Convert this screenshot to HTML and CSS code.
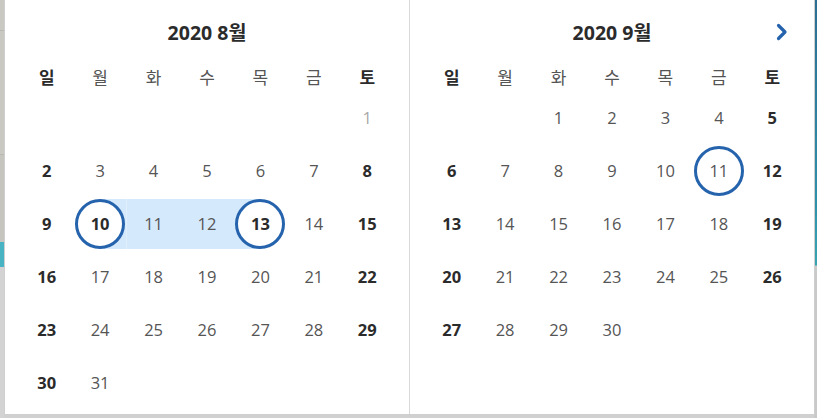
FILE: index.html
```html
<!DOCTYPE html>
<html lang="ko">
<head>
<meta charset="utf-8">
<link rel="stylesheet" href="styles.css">
</head>
<body>
<div class="picker">
  <section class="month">
    <div class="title"><span></span><h2>2020 8월</h2><span></span></div>
    <div class="grid week">
      <div class="wd we">일</div><div class="wd">월</div><div class="wd">화</div><div class="wd">수</div><div class="wd">목</div><div class="wd">금</div><div class="wd we">토</div>
    </div>
    <div class="grid days">
      <div></div><div></div><div></div><div></div><div></div><div></div><div class="d off"><span>1</span></div>
      <div class="d we"><span>2</span></div><div class="d"><span>3</span></div><div class="d"><span>4</span></div><div class="d"><span>5</span></div><div class="d"><span>6</span></div><div class="d"><span>7</span></div><div class="d we"><span>8</span></div>
      <div class="d we"><span>9</span></div><div class="d sel start"><span>10</span></div><div class="d mid"><span>11</span></div><div class="d mid"><span>12</span></div><div class="d sel end"><span>13</span></div><div class="d"><span>14</span></div><div class="d we"><span>15</span></div>
      <div class="d we"><span>16</span></div><div class="d"><span>17</span></div><div class="d"><span>18</span></div><div class="d"><span>19</span></div><div class="d"><span>20</span></div><div class="d"><span>21</span></div><div class="d we"><span>22</span></div>
      <div class="d we"><span>23</span></div><div class="d"><span>24</span></div><div class="d"><span>25</span></div><div class="d"><span>26</span></div><div class="d"><span>27</span></div><div class="d"><span>28</span></div><div class="d we"><span>29</span></div>
      <div class="d we"><span>30</span></div><div class="d"><span>31</span></div>
    </div>
  </section>
  <section class="month second">
    <div class="title"><span></span><h2>2020 9월</h2>
      <button class="next" aria-label="다음 달"><svg width="14" height="20" viewBox="0 0 14 20"><path d="M3.5 3.5 L10 10 L3.5 16.5" fill="none" stroke="#2563ad" stroke-width="3.2" stroke-linecap="round" stroke-linejoin="round"/></svg></button>
    </div>
    <div class="grid week">
      <div class="wd we">일</div><div class="wd">월</div><div class="wd">화</div><div class="wd">수</div><div class="wd">목</div><div class="wd">금</div><div class="wd we">토</div>
    </div>
    <div class="grid days">
      <div></div><div></div><div class="d"><span>1</span></div><div class="d"><span>2</span></div><div class="d"><span>3</span></div><div class="d"><span>4</span></div><div class="d we"><span>5</span></div>
      <div class="d we"><span>6</span></div><div class="d"><span>7</span></div><div class="d"><span>8</span></div><div class="d"><span>9</span></div><div class="d"><span>10</span></div><div class="d today"><span>11</span></div><div class="d we"><span>12</span></div>
      <div class="d we"><span>13</span></div><div class="d"><span>14</span></div><div class="d"><span>15</span></div><div class="d"><span>16</span></div><div class="d"><span>17</span></div><div class="d"><span>18</span></div><div class="d we"><span>19</span></div>
      <div class="d we"><span>20</span></div><div class="d"><span>21</span></div><div class="d"><span>22</span></div><div class="d"><span>23</span></div><div class="d"><span>24</span></div><div class="d"><span>25</span></div><div class="d we"><span>26</span></div>
      <div class="d we"><span>27</span></div><div class="d"><span>28</span></div><div class="d"><span>29</span></div><div class="d"><span>30</span></div>
    </div>
  </section>
</div>
</body>
</html>
```

FILE: styles.css
```css
html, body {
  margin: 0;
  padding: 0;
}
body {
  width: 817px;
  height: 418px;
  overflow: hidden;
  font-family: "Open Sans", "Noto Sans CJK KR", sans-serif;
  background:
    linear-gradient(to bottom, #c9c8c3 0 30px, #b9b8b3 30px 31px, #c9c8c3 31px 154px, #b9b8b3 154px 155px, #c5c4bf 155px 242px, #47b3c3 242px 267px, #d3d3d3 267px) left top / 4px 100% no-repeat,
    linear-gradient(to bottom, #2d6d95 0, #2f8fa8 200px, #3aa3b3 265px, #c9c9c9 266px) right top / 3px 100% no-repeat,
    #d0d0d0;
}
.picker {
  display: flex;
  margin-left: 4px;
  width: 809px;
  height: 414px;
  background: #fff;
  border: 1px solid #cfcfcf;
  border-top: none;
}
.month {
  width: 374px;
  padding: 0 15px;
}
.month.second {
  border-left: 1px solid #d9d9d9;
}
.title {
  display: grid;
  grid-template-columns: 1fr auto 1fr;
  align-items: center;
  padding-top: 20px;
  height: 26px;
}
.title h2 {
  margin: 0;
  font-size: 19.5px;
  font-weight: 700;
  line-height: 26px;
  color: #2b2b2b;
}
.next {
  justify-self: end;
  margin-right: 10px;
  padding: 0;
  border: none;
  background: none;
  display: flex;
  height: 20px;
  margin-top: -2px;
}
.grid {
  display: grid;
  grid-template-columns: repeat(7, 1fr);
}
.week {
  margin-top: 15px;
  height: 30px;
}
.wd {
  display: flex;
  align-items: center;
  justify-content: center;
  font-size: 17px;
  color: #555;
}
.wd.we {
  font-weight: 700;
  color: #2b2b2b;
}
.days {
  grid-auto-rows: 53px;
}
.d {
  display: flex;
  align-items: center;
  justify-content: center;
  font-size: 16.5px;
  color: #555;
}
.d span {
  width: 50px;
  height: 50px;
  box-sizing: border-box;
  display: flex;
  align-items: center;
  justify-content: center;
  border-radius: 50%;
}
.d.we {
  font-weight: 700;
  color: #2b2b2b;
}
.d.off {
  color: #a8a8a8;
}
.d.mid {
  background: #d5e9fc;
  background-clip: content-box;
  padding: 1.5px 0;
}
.d.start {
  background: linear-gradient(to right, transparent 50%, #d5e9fc 50%) center / 100% 50px no-repeat;
}
.d.end {
  background: linear-gradient(to right, #d5e9fc 50%, transparent 50%) center / 100% 50px no-repeat;
}
.d.sel {
  font-weight: 700;
  color: #2b2b2b;
}
.d.sel span,
.d.today span {
  border: 3px solid #2563ad;
  background: #fff;
}
```
